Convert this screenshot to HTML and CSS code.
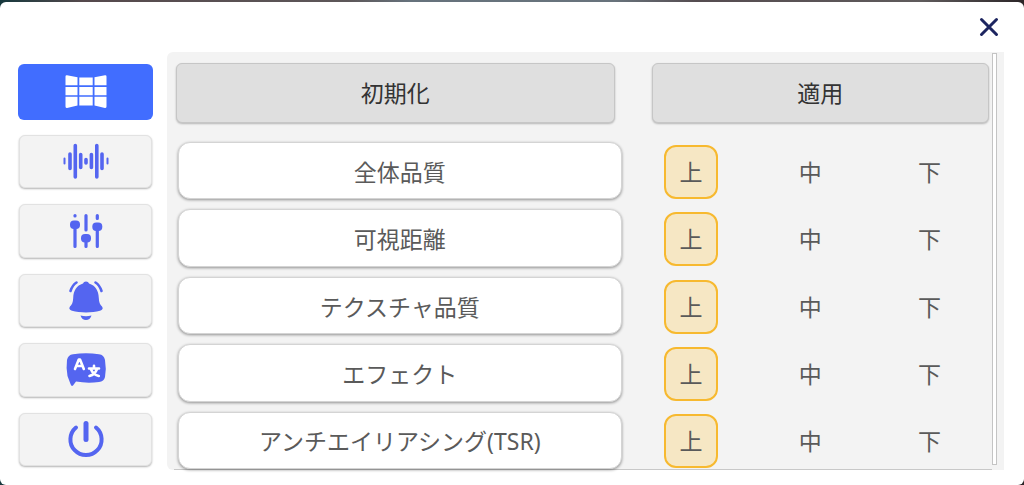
FILE: index.html
```html
<!DOCTYPE html>
<html lang="ja">
<head>
  <meta charset="UTF-8">
  <title>設定</title>
  <meta name="viewport" content="width=device-width, initial-scale=1.0">
  <link rel="stylesheet" href="styles.css">
</head>
<body>
  <div class="dialog">
    <header class="dialog-header">
      <button type="button" class="close" aria-label="閉じる">
        <svg width="20" height="20" viewBox="0 0 20 20"><path d="M2.5 2.5 17.5 17.5M17.5 2.5 2.5 17.5" fill="none" stroke="#1d2560" stroke-width="3" stroke-linecap="round"/></svg>
      </button>
    </header>

    <div class="dialog-body">
      <!-- Category tabs -->
      <nav class="tabs">
        <button type="button" class="tab active" aria-label="グラフィック">
          <svg width="48" height="40" viewBox="0 0 48 40" fill="#fff">
            <path d="M5 3.2Q3.500 3 3.500 4.500V13.300H15.500V5.200ZM17.300 5.400H30.700V13.300H17.300ZM32.500 5.200 43 3.200Q44.500 3 44.500 4.500V13.300H32.500Z"/>
            <path d="M3.500 14.900H15.500V23.200H3.500ZM17.300 14.900H30.700V23.200H17.300ZM32.500 14.900H44.500V23.200H32.500Z"/>
            <path d="M3.500 24.800H15.500V33.600L5 36Q3.500 36 3.500 34.500ZM17.300 24.800H30.700V33.500H17.300ZM32.500 24.800H44.500V34.500Q44.500 36 43 36L32.500 33.600Z"/>
          </svg>
        </button>
        <button type="button" class="tab" aria-label="サウンド">
          <svg width="48" height="40" viewBox="0 0 48 40" fill="none" stroke="#5465f0" stroke-linecap="round">
            <path d="M2.500 17.500V22.500M45.500 17.500V22.500" stroke-width="2"/>
            <path d="M8 13V27.500M13.300 4.500V36M18.700 13.500V26.500M24 18.500V22M29.400 13.500V26.500M34.800 4.500V36M40 13V27.500" stroke-width="3.600"/>
          </svg>
        </button>
        <button type="button" class="tab" aria-label="コントロール">
          <svg width="48" height="40" viewBox="0 0 48 40" fill="none" stroke="#5465f0" stroke-width="3.200" stroke-linecap="round">
            <path d="M13 4.500V5M13 14V35.500M24 4.500V19M24 28V35.500M35.300 4.500V7.500M35.300 16V35.500"/>
            <g fill="#5465f0" stroke="none"><rect x="8" y="9.500" width="10" height="8.500" rx="4"/><rect x="19" y="23" width="10" height="8.500" rx="4"/><rect x="30.300" y="11.500" width="10" height="8.500" rx="4"/></g>
          </svg>
        </button>
        <button type="button" class="tab" aria-label="通知">
          <svg width="48" height="40" viewBox="0 0 48 40" fill="#5465f0">
            <path d="M24 1.500C25.500 1.500 26.500 2.300 27 3.500C33.500 5.500 36.500 10.500 36.800 18C37 22.500 38 24.500 40 26.500C41.500 28.500 40.500 30 38 30.700C30 33 18 33 10 30.700C7.500 30 6.500 28.500 8 26.500C10 24.500 11 22.500 11.200 18C11.500 10.500 14.500 5.500 21 3.500C21.500 2.300 22.500 1.500 24 1.500Z"/>
            <path d="M18.500 35.500Q24 36.800 29.500 35.500Q28 40 24 40Q20 40 18.500 35.500Z"/>
            <path d="M14.500 2.500Q10.500 5 8.500 11M33.500 2.500Q37.500 5 39.500 11" fill="none" stroke="#5465f0" stroke-width="2.600" stroke-linecap="round"/>
          </svg>
        </button>
        <button type="button" class="tab" aria-label="言語">
          <svg width="48" height="40" viewBox="0 0 48 40">
            <path d="M11 4.300Q24 2.200 37 4.300Q42 5 43 10Q44.500 18.500 43 27Q42 31.500 37 32Q25 33.500 14 31.500L11 35.500Q9.500 36.800 8.500 34L5.500 26Q4 17 5 10Q6 5 11 4.300Z" fill="#5465f0"/>
            <path d="M13 19 16.800 9.500H18L21.800 19M14.500 16H20.300M27 18.500H37M32 15.800V18M35 19Q33 24.500 27.500 26M29 19.500Q31.500 25 36.800 26" fill="none" stroke="#fff" stroke-width="2.600" stroke-linecap="round" stroke-linejoin="round"/>
          </svg>
        </button>
        <button type="button" class="tab" aria-label="終了">
          <svg width="48" height="40" viewBox="0 0 48 40" fill="none" stroke="#5465f0" stroke-linecap="round">
            <path d="M24 4.500V20.500" stroke-width="5"/>
            <path d="M14 8.500A15.600 15.600 0 1 0 34 8.500" stroke-width="4"/>
          </svg>
        </button>
      </nav>

      <!-- Graphics settings -->
      <main class="panel">
        <div class="settings">
          <div class="actions">
            <button type="button" class="action">初期化</button>
            <button type="button" class="action">適用</button>
          </div>

          <div class="setting" role="radiogroup" aria-labelledby="overall">
            <div class="name" id="overall">全体品質</div>
            <div class="options">
              <label class="option"><input type="radio" name="overall" checked><span>上</span></label>
              <label class="option"><input type="radio" name="overall"><span>中</span></label>
              <label class="option"><input type="radio" name="overall"><span>下</span></label>
            </div>
          </div>
          <div class="setting" role="radiogroup" aria-labelledby="distance">
            <div class="name" id="distance">可視距離</div>
            <div class="options">
              <label class="option"><input type="radio" name="distance" checked><span>上</span></label>
              <label class="option"><input type="radio" name="distance"><span>中</span></label>
              <label class="option"><input type="radio" name="distance"><span>下</span></label>
            </div>
          </div>
          <div class="setting" role="radiogroup" aria-labelledby="texture">
            <div class="name" id="texture">テクスチャ品質</div>
            <div class="options">
              <label class="option"><input type="radio" name="texture" checked><span>上</span></label>
              <label class="option"><input type="radio" name="texture"><span>中</span></label>
              <label class="option"><input type="radio" name="texture"><span>下</span></label>
            </div>
          </div>
          <div class="setting" role="radiogroup" aria-labelledby="effect">
            <div class="name" id="effect">エフェクト</div>
            <div class="options">
              <label class="option"><input type="radio" name="effect" checked><span>上</span></label>
              <label class="option"><input type="radio" name="effect"><span>中</span></label>
              <label class="option"><input type="radio" name="effect"><span>下</span></label>
            </div>
          </div>
          <div class="setting" role="radiogroup" aria-labelledby="antialias">
            <div class="name" id="antialias">アンチエイリアシング(TSR)</div>
            <div class="options">
              <label class="option"><input type="radio" name="antialias" checked><span>上</span></label>
              <label class="option"><input type="radio" name="antialias"><span>中</span></label>
              <label class="option"><input type="radio" name="antialias"><span>下</span></label>
            </div>
          </div>
        </div>
        <div class="scrollbar"></div>
      </main>
    </div>
  </div>
</body>
</html>
```
FILE: styles.css
```css
* {
  box-sizing: border-box;
}

/* Dark strip of the game view above the dialog */
body {
  margin: 0;
  padding-top: 2px;
  min-height: 100vh;
  display: flex;
  background: linear-gradient(to right, #16383d, #55494c 8%, #5d5759 34%, #66727c 40%, #68737c 60%, #554c50 68%, #5f5b5c 90%, #2b2527);
  font-family: 'Noto Sans', 'Noto Sans CJK JP', sans-serif;
  font-size: 23px;
  line-height: 32px;
  color: #5a5a5a;
}

button {
  font: inherit;
  border: none;
  padding: 0;
  cursor: pointer;
}

.dialog {
  flex: 1;
  display: flex;
  flex-direction: column;
  background: #fff;
  border-radius: 6px;
}

.dialog-header {
  display: flex;
  justify-content: flex-end;
  padding: 15px 25px 15px 0;
}
.close {
  display: flex;
  background: none;
}

.dialog-body {
  flex: 1;
  display: flex;
  gap: 14px;
  padding: 0 20px 15px 18px;
}

/* Category tabs */
.tabs {
  flex: 0 0 135px;
  display: grid;
  grid-auto-rows: 1fr;
  gap: 14px;
  padding: 12px 0 3px;
}
.tab {
  min-height: 48px;
  display: flex;
  align-items: center;
  justify-content: center;
  margin: 1px;
  background: #f3f3f3;
  border: 1px solid #e2e2e2;
  border-radius: 6px;
  box-shadow: 0 1px 2px rgba(0,0,0,0.3);
}
.tab.active {
  background: #416dff;
  margin: 0;
  border: none;
  box-shadow: none;
}

/* Settings panel */
.panel {
  flex: 1;
  display: flex;
  padding: 0 7px;
  background: #f3f3f3;
  border-radius: 6px 0 0 6px;
}
.settings {
  flex: 1;
  display: flex;
  flex-direction: column;
  gap: 10px;
  padding: 11px 3px 0 2px;
  border-bottom: 1px solid #c8c8c8;
}
.scrollbar {
  flex: 0 0 5px;
  margin: 1px 0 5px;
  background: #fff;
  border: 1px solid #c4c4c4;
}

.actions {
  display: grid;
  grid-template-columns: 438fr 337fr;
  gap: 37px;
  margin-bottom: 9px;
}
.action {
  height: 60px;
  background: #dfdfdf;
  border: 1px solid #c6c6c6;
  border-radius: 6px;
  box-shadow: 0 1px 2px rgba(0,0,0,0.25);
  color: #333;
}

.setting {
  flex: 1;
  display: grid;
  grid-template-columns: 443fr 357fr;
  gap: 10px;
  padding-left: 2px;
}
.name {
  display: flex;
  align-items: center;
  justify-content: center;
  min-height: 56px;
  padding-top: 2px;
  background: #fff;
  border: 1px solid #d4d4d4;
  border-radius: 12px;
  box-shadow: 0 1px 3px rgba(0,0,0,0.4);
}
.options {
  display: grid;
  grid-template-columns: repeat(3, 1fr);
  align-items: center;
  justify-items: center;
  padding-top: 2px;
}
.option {
  display: flex;
  cursor: pointer;
}
.option input {
  appearance: none;
  width: 0;
  margin: 0;
}
.option span {
  width: 54px;
  height: 54px;
  display: flex;
  align-items: center;
  justify-content: center;
  border: 2px solid transparent;
  border-radius: 12px;
}
.option input:checked + span {
  background: #f6e7c4;
  border-color: #f7b92f;
}
.option input:focus-visible + span {
  border-color: #416dff;
}
```
